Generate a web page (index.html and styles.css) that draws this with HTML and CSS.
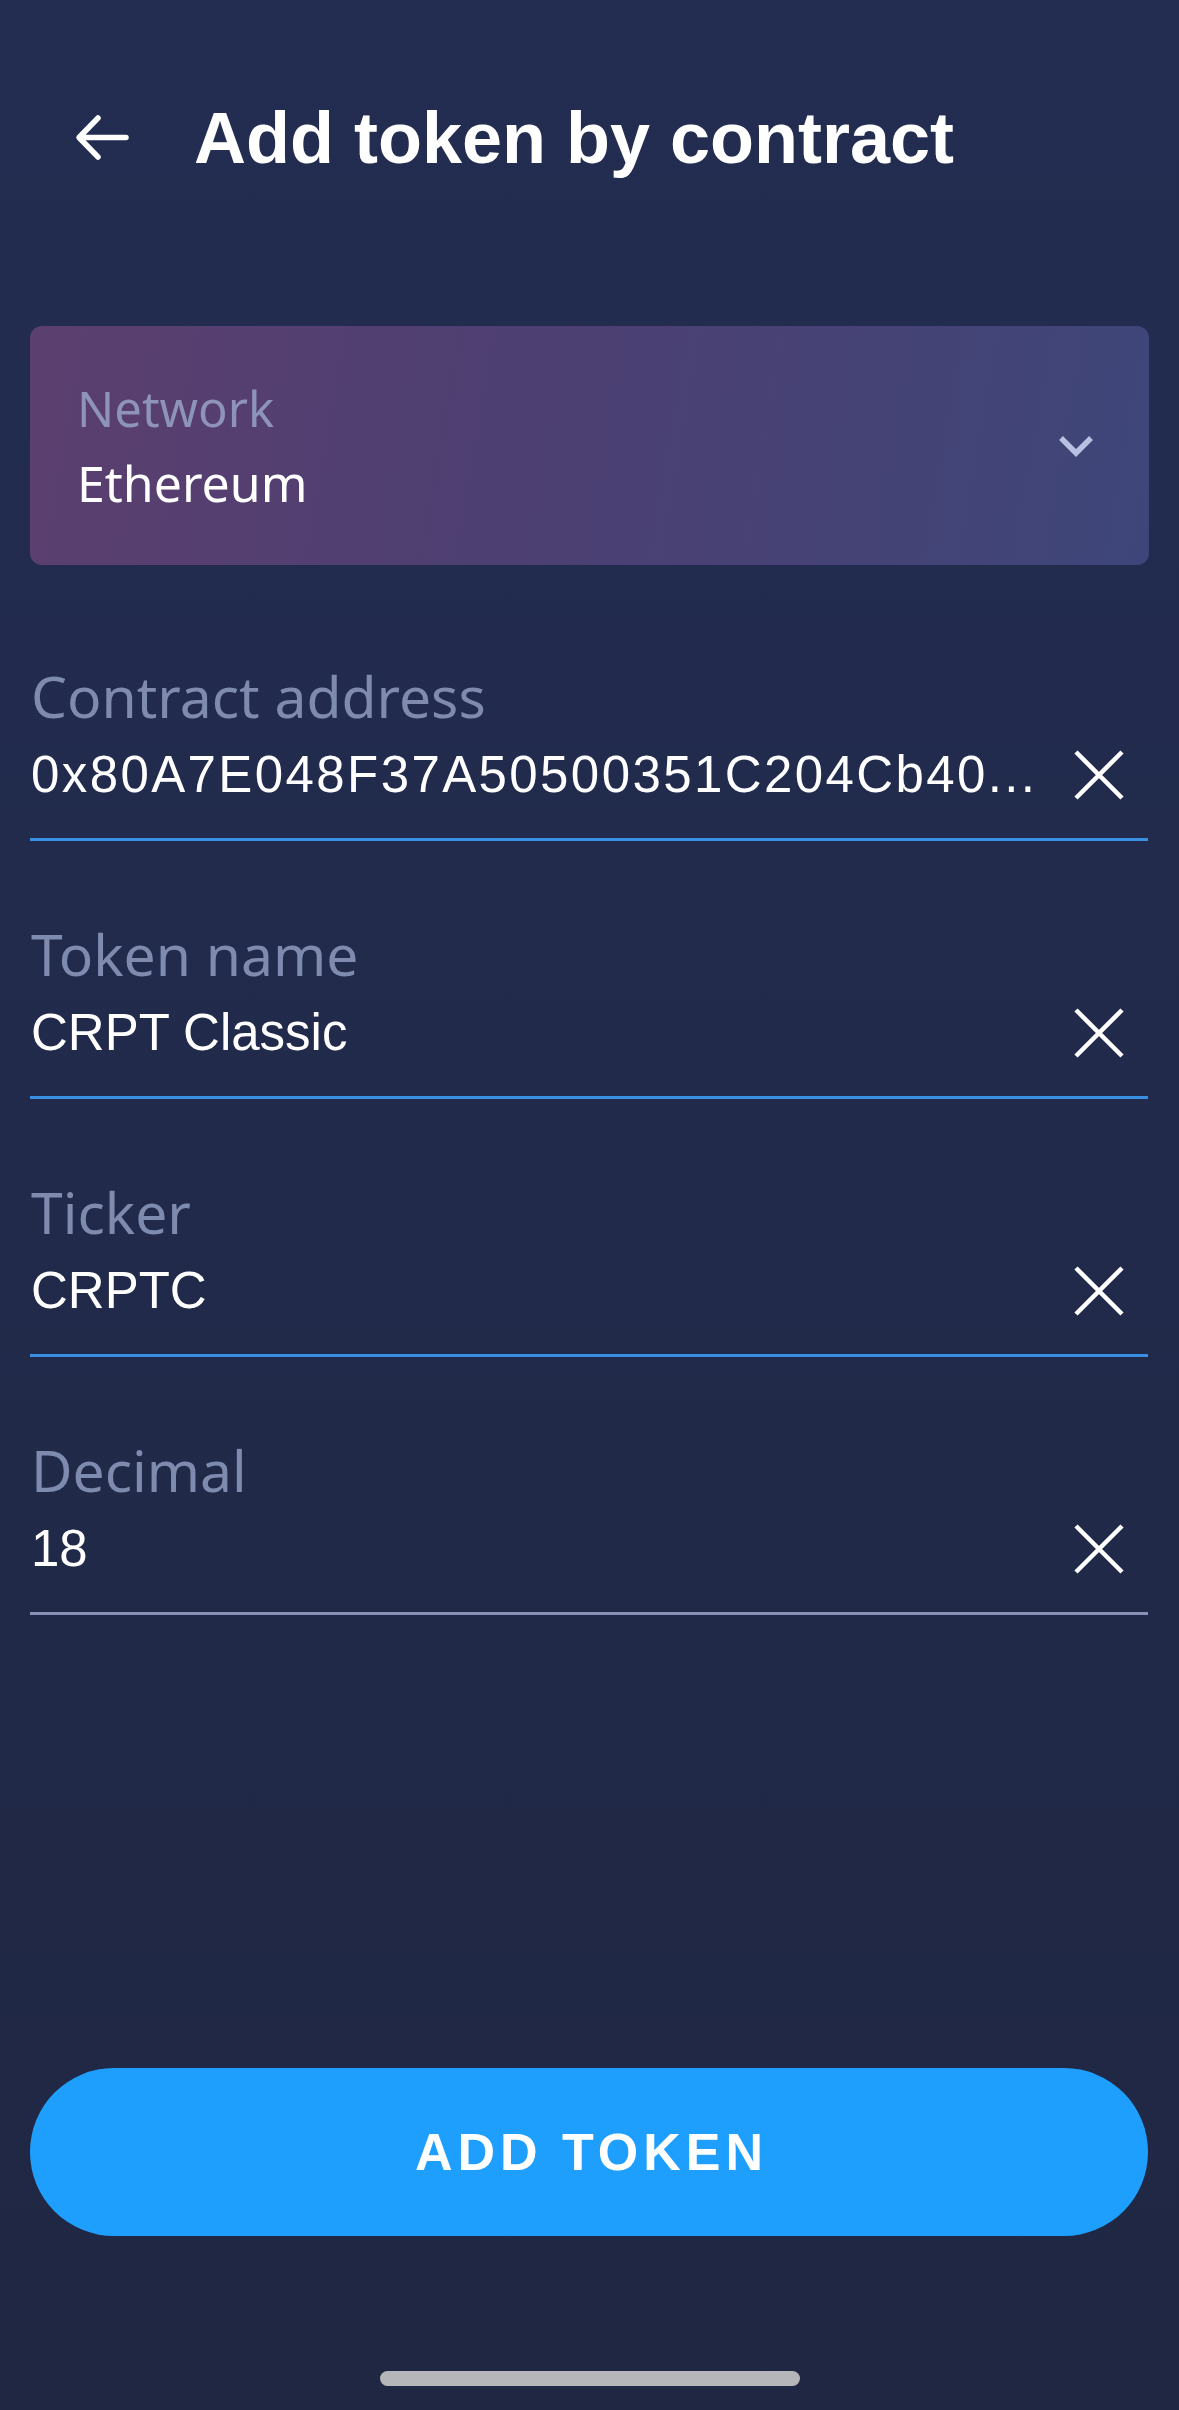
FILE: index.html
```html
<!DOCTYPE html>
<html lang="en">
<head>
    <meta charset="UTF-8">
    <meta name="viewport" content="width=device-width, initial-scale=1.0">
    <title>Add token by contract</title>
    <link rel="stylesheet" href="styles.css">
</head>
<body>
    <div class="screen">
        <div class="header">
            <svg class="back" width="56" height="50" viewBox="0 0 56 50">
                <path d="M52 24.5 H6 M24 5 L5 24.5 L24 44" fill="none" stroke="#fff" stroke-width="5.5" stroke-linecap="round" stroke-linejoin="round"/>
            </svg>
            <h1>Add token by contract</h1>
        </div>

        <div class="network">
            <div>
                <div class="network-label">Network</div>
                <div class="network-value">Ethereum</div>
            </div>
            <svg class="chevron" width="36" height="22" viewBox="0 0 36 22">
                <path d="M3 3 L18 18 L33 3" fill="none" stroke="#b9c1e2" stroke-width="5.5"/>
            </svg>
        </div>

        <div class="fields">
            <div class="field active">
                <div class="field-label">Contract address</div>
                <div class="field-row">
                    <div class="field-value address">0x80A7E048F37A50500351C204Cb40...</div>
                    <svg class="clear" width="52" height="52" viewBox="0 0 52 52">
                        <path d="M3 3 L49 49 M49 3 L3 49" stroke="#fff" stroke-width="4.5"/>
                    </svg>
                </div>
            </div>
            <div class="field active">
                <div class="field-label">Token name</div>
                <div class="field-row">
                    <div class="field-value">CRPT Classic</div>
                    <svg class="clear" width="52" height="52" viewBox="0 0 52 52">
                        <path d="M3 3 L49 49 M49 3 L3 49" stroke="#fff" stroke-width="4.5"/>
                    </svg>
                </div>
            </div>
            <div class="field active">
                <div class="field-label">Ticker</div>
                <div class="field-row">
                    <div class="field-value">CRPTC</div>
                    <svg class="clear" width="52" height="52" viewBox="0 0 52 52">
                        <path d="M3 3 L49 49 M49 3 L3 49" stroke="#fff" stroke-width="4.5"/>
                    </svg>
                </div>
            </div>
            <div class="field">
                <div class="field-label">Decimal</div>
                <div class="field-row">
                    <div class="field-value">18</div>
                    <svg class="clear" width="52" height="52" viewBox="0 0 52 52">
                        <path d="M3 3 L49 49 M49 3 L3 49" stroke="#fff" stroke-width="4.5"/>
                    </svg>
                </div>
            </div>
        </div>

        <button class="add-btn">ADD TOKEN</button>
        <div class="home-bar"></div>
    </div>
</body>
</html>
```

FILE: styles.css
```css
body {
    margin: 0;
    padding: 0;
    font-family: 'Noto Sans', sans-serif;
    color: #fff;
    background: #212a4a;
}
.screen {
    height: 2410px;
    display: flex;
    flex-direction: column;
    background: linear-gradient(180deg, #232d51 0%, #1f2743 100%);
    overflow: hidden;
}
.header {
    display: flex;
    align-items: center;
    padding: 93px 0 0 74px;
    height: 90px;
}
.back {
    margin-right: 64px;
    flex-shrink: 0;
}
h1 {
    margin: 0;
    font-family: 'Liberation Sans', Arial, sans-serif;
    font-weight: bold;
    font-size: 72px;
    line-height: 90px;
}
.network {
    margin: 143px 30px 0;
    padding: 52px 55px 52px 47px;
    border-radius: 12px;
    background: linear-gradient(100deg, #5b3f6f 0%, #4d3f72 45%, #3e4679 100%);
    display: flex;
    justify-content: space-between;
    align-items: center;
}
.network-label {
    font-size: 49px;
    line-height: 60px;
    color: #8d93b9;
}
.network-value {
    margin-top: 15px;
    font-size: 50px;
    line-height: 60px;
}
.fields {
    margin: 99px 31px 0 30px;
    display: flex;
    flex-direction: column;
    gap: 81px;
}
.field {
    padding-bottom: 33px;
    border-bottom: 3px solid #8891b6;
}
.field.active {
    border-bottom-color: #3990e3;
}
.field-label {
    padding-left: 1px;
    font-size: 57px;
    line-height: 64px;
    color: #7e8aae;
}
.field-row {
    margin-top: 17px;
    height: 60px;
    display: flex;
    align-items: center;
}
.field-value {
    flex: 1;
    min-width: 0;
    padding-left: 1px;
    font-family: 'Liberation Sans', Arial, sans-serif;
    font-size: 51px;
    line-height: 60px;
    white-space: nowrap;
    overflow: hidden;
}
.address {
    letter-spacing: 2.4px;
}
.clear {
    flex-shrink: 0;
    margin: 0 23px 0 30px;
}
.add-btn {
    margin: auto 31px 0 30px;
    height: 168px;
    border: none;
    border-radius: 84px;
    background: #1f9ffd;
    color: #fff;
    font-family: 'Liberation Sans', Arial, sans-serif;
    font-weight: bold;
    font-size: 52px;
    letter-spacing: 5px;
    padding: 0 0 0 5px;
}
.home-bar {
    margin: 135px auto 24px;
    width: 420px;
    height: 15px;
    border-radius: 8px;
    background: #b4b6ba;
}
```
